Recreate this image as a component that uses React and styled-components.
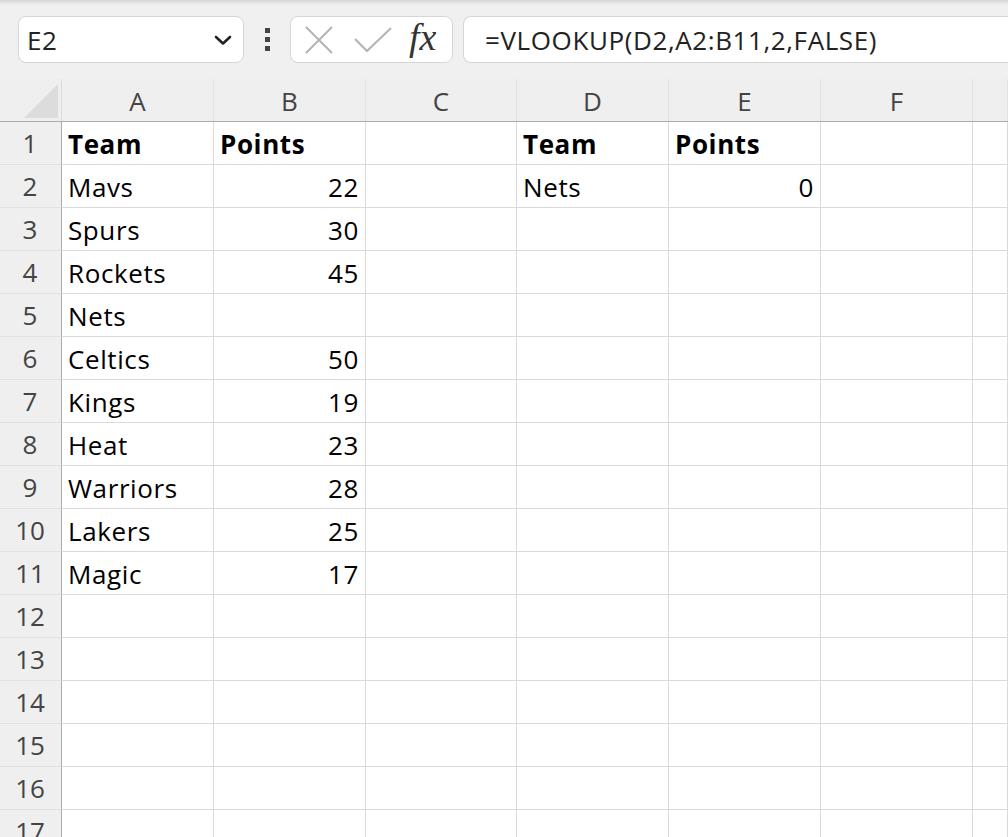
import React from 'react';
import styled, { createGlobalStyle } from 'styled-components';

const GlobalStyle = createGlobalStyle`
  html, body {
    margin: 0;
    padding: 0;
    background: #f0f0f0;
    overflow: hidden;
  }
  body {
    font-family: "Open Sans", "Noto Sans", sans-serif;
  }
`;

const COLS = ['A', 'B', 'C', 'D', 'E', 'F'];
const WIDTHS = [152, 152, 151, 152, 152, 152];

const rows = [
  [{ v: 'Team', b: true }, { v: 'Points', b: true }, null, { v: 'Team', b: true }, { v: 'Points', b: true }],
  [{ v: 'Mavs' }, { v: '22', n: true }, null, { v: 'Nets' }, { v: '0', n: true }],
  [{ v: 'Spurs' }, { v: '30', n: true }],
  [{ v: 'Rockets' }, { v: '45', n: true }],
  [{ v: 'Nets' }],
  [{ v: 'Celtics' }, { v: '50', n: true }],
  [{ v: 'Kings' }, { v: '19', n: true }],
  [{ v: 'Heat' }, { v: '23', n: true }],
  [{ v: 'Warriors' }, { v: '28', n: true }],
  [{ v: 'Lakers' }, { v: '25', n: true }],
  [{ v: 'Magic' }, { v: '17', n: true }],
  [], [], [], [], [], [],
];

function App() {
  return (
    <Page>
      <GlobalStyle />
      <TopBar>
        <NameBox>
          <NameText>E2</NameText>
          <svg width="20" height="12" viewBox="0 0 20 12">
            <path d="M3 3 L10 9.5 L17 3" fill="none" stroke="#222" strokeWidth="2.6" strokeLinecap="round" strokeLinejoin="round" />
          </svg>
        </NameBox>
        <Dots>
          <i />
          <i />
          <i />
        </Dots>
        <FxBox>
          <svg width="30" height="30" viewBox="0 0 30 30">
            <path d="M2 2 L28 28 M28 2 L2 28" stroke="#b4b4b4" strokeWidth="2" fill="none" />
          </svg>
          <svg width="38" height="26" viewBox="0 0 38 26">
            <path d="M1 12 L13 24 L37 1" stroke="#b4b4b4" strokeWidth="2" fill="none" />
          </svg>
          <FxText>fx</FxText>
        </FxBox>
        <FormulaBox>=VLOOKUP(D2,A2:B11,2,FALSE)</FormulaBox>
      </TopBar>
      <Sheet>
        <HeaderRow>
          <Corner>
            <svg width="61" height="42" viewBox="0 0 61 42">
              <polygon points="24,39 58,39 58,5" fill="#dcdcdc" />
            </svg>
          </Corner>
          {COLS.map((c, i) => (
            <ColHead key={c} $w={WIDTHS[i]}>{c}</ColHead>
          ))}
          <ColHead $grow />
        </HeaderRow>
        {rows.map((r, ri) => (
          <Row key={ri}>
            <RowHead>{ri + 1}</RowHead>
            {COLS.map((c, ci) => {
              const cell = r[ci];
              return (
                <Cell key={c} $w={WIDTHS[ci]} $bold={cell && cell.b} $num={cell && cell.n}>
                  {cell ? cell.v : ''}
                </Cell>
              );
            })}
            <Cell $grow />
          </Row>
        ))}
      </Sheet>
    </Page>
  );
}

const Page = styled.div`
  width: 1008px;
  height: 837px;
  overflow: hidden;
  background: #f0f0f0;
`;

const TopBar = styled.div`
  height: 79px;
  box-sizing: border-box;
  padding: 16px 0 0 18px;
  display: flex;
  align-items: flex-start;
  box-shadow: inset 0 6px 5px -5px rgba(0, 0, 0, 0.18);
`;

const NameBox = styled.div`
  width: 226px;
  height: 47px;
  box-sizing: border-box;
  border: 1px solid #d6d6d6;
  border-radius: 8px;
  background: #fff;
  display: flex;
  align-items: center;
  justify-content: space-between;
  padding: 0 10px 0 8px;
`;

const NameText = styled.span`
  font-size: 26px;
  letter-spacing: 0.5px;
  color: #222;
`;

const Dots = styled.div`
  width: 46px;
  display: flex;
  flex-direction: column;
  align-items: center;
  gap: 4px;
  padding-top: 12px;
  i {
    display: block;
    width: 5px;
    height: 5px;
    background: #444;
  }
`;

const FxBox = styled.div`
  width: 163px;
  height: 47px;
  box-sizing: border-box;
  border: 1px solid #d6d6d6;
  border-radius: 8px;
  background: #fff;
  display: flex;
  align-items: center;
  padding: 0 10px 0 13px;
  gap: 20px;
`;

const FxText = styled.span`
  font-family: "Liberation Serif", "DejaVu Serif", serif;
  font-style: italic;
  font-size: 38px;
  color: #333;
  line-height: 1;
  margin-top: -5px;
  margin-left: -3px;
`;

const FormulaBox = styled.div`
  flex: 1;
  margin-left: 10px;
  height: 47px;
  box-sizing: border-box;
  border: 1px solid #d6d6d6;
  border-right: none;
  border-radius: 8px 0 0 8px;
  background: #fff;
  display: flex;
  align-items: center;
  padding-left: 21px;
  font-size: 26px;
  letter-spacing: 0.6px;
  color: #222;
  white-space: nowrap;
`;

const Sheet = styled.div`
  display: flex;
  flex-direction: column;
`;

const HeaderRow = styled.div`
  display: flex;
  height: 42px;
  border-bottom: 1px solid #ababab;
  background: #efefef;
`;

const Corner = styled.div`
  width: 61px;
  flex: none;
  border-right: 1px solid #dcdcdc;
  svg { display: block; }
`;

const ColHead = styled.div`
  width: ${(p) => (p.$w ? `${p.$w}px` : 'auto')};
  flex: ${(p) => (p.$grow ? '1' : 'none')};
  box-sizing: border-box;
  border-right: 1px solid #e2e2e2;
  display: flex;
  align-items: center;
  justify-content: center;
  font-size: 26px;
  color: #444;
  padding-top: 2px;
`;

const Row = styled.div`
  display: flex;
  height: 43px;
  flex: none;
`;

const RowHead = styled.div`
  width: 62px;
  flex: none;
  box-sizing: border-box;
  background: #efefef;
  border-right: 1px solid #ababab;
  border-bottom: 1px solid #e2e2e2;
  display: flex;
  align-items: center;
  justify-content: center;
  font-size: 26px;
  color: #444;
  padding-right: 1px;
`;

const Cell = styled.div`
  width: ${(p) => (p.$w ? `${p.$w}px` : 'auto')};
  flex: ${(p) => (p.$grow ? '1' : 'none')};
  box-sizing: border-box;
  background: #fff;
  border-right: 1px solid #dadada;
  border-bottom: 1px solid #dadada;
  display: flex;
  align-items: center;
  justify-content: ${(p) => (p.$num ? 'flex-end' : 'flex-start')};
  padding: 1px 6px 0 6px;
  font-size: 26px;
  letter-spacing: 0.6px;
  font-weight: ${(p) => (p.$bold ? 700 : 400)};
  color: #000;
  white-space: nowrap;
`;

export default App;
